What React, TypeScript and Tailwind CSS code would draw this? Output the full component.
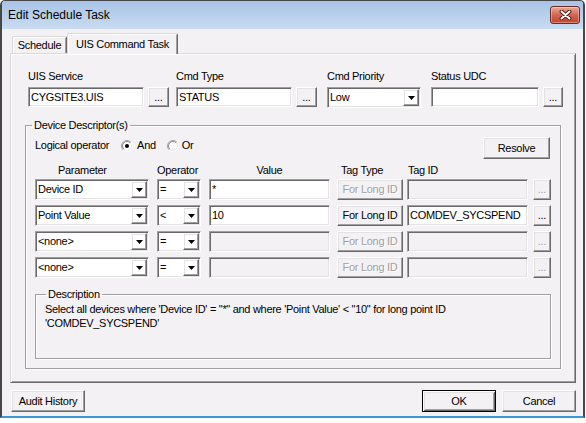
import React from 'react';

// classic 3D edges
const raised =
  'border border-t-white border-l-white border-r-[#696969] border-b-[#696969] shadow-[inset_-1px_-1px_0_#a0a0a0,inset_1px_1px_0_#e3e3e3]';
const defaultRaised =
  'border border-black shadow-[inset_1px_1px_0_#fff,inset_-1px_-1px_0_#696969,inset_2px_2px_0_#e3e3e3,inset_-2px_-2px_0_#a0a0a0]';
const sunken =
  'border border-t-[#a0a0a0] border-l-[#a0a0a0] border-r-white border-b-white shadow-[inset_1px_1px_0_#696969,inset_-1px_-1px_0_#e3e3e3]';
const etched = 'border border-[#a0a0a0] shadow-[inset_1px_1px_0_#fff,1px_1px_0_#fff]';
const grayText = 'text-[#a0a0a0] [text-shadow:1px_1px_0_#fff]';

type BoxProps = { className: string; value?: string; disabled?: boolean };

const TextBox = ({ className, value, disabled }: BoxProps) => (
  <div
    className={`${sunken} ${className} flex items-center pl-[2px] whitespace-nowrap overflow-hidden ${
      disabled ? 'bg-[#f4f1f4]' : 'bg-white'
    }`}
  >
    {value}
  </div>
);

type BtnProps = { className: string; children: React.ReactNode; disabled?: boolean; isDefault?: boolean };

const Button = ({ className, children, disabled, isDefault }: BtnProps) => (
  <div
    className={`${isDefault ? defaultRaised : raised} ${className} flex items-center justify-center whitespace-nowrap ${
      disabled ? grayText : ''
    }`}
  >
    {children}
  </div>
);

const Combo = ({ className, value }: { className: string; value: string }) => (
  <div className={`${sunken} ${className} h-[21px] bg-white flex p-px`}>
    <div className="flex-1 flex items-center pl-[1px] overflow-hidden whitespace-nowrap">{value}</div>
    <div className={`${raised} w-[16px] flex items-center justify-center`}>
      <svg width="7" height="4" viewBox="0 0 7 4">
        <path d="M0 0h7L3.5 4z" fill="#000" />
      </svg>
    </div>
  </div>
);

const Radio = ({ on, id }: { on?: boolean; id: string }) => (
  <svg width="12" height="12" viewBox="0 0 12 12">
    <defs>
      <linearGradient id={`ro-${id}`} x1="0" y1="0" x2="1" y2="1">
        <stop offset="0.45" stopColor="#a0a0a0" />
        <stop offset="0.55" stopColor="#ffffff" />
      </linearGradient>
      <linearGradient id={`ri-${id}`} x1="0" y1="0" x2="1" y2="1">
        <stop offset="0.45" stopColor="#8a8a8a" />
        <stop offset="0.55" stopColor="#e3e3e3" />
      </linearGradient>
    </defs>
    <circle cx="6" cy="6" r="5.5" fill="none" stroke={`url(#ro-${id})`} />
    <circle cx="6" cy="6" r="4.5" fill="#fff" stroke={`url(#ri-${id})`} />
    {on && <circle cx="6" cy="6" r="2" fill="#000" />}
  </svg>
);

const rows = [
  { param: 'Device ID', op: '=', value: '*', valueOn: true, tagOn: false, tag: '' },
  { param: 'Point Value', op: '<', value: '10', valueOn: true, tagOn: true, tag: 'COMDEV_SYCSPEND' },
  { param: '<none>', op: '=', value: '', valueOn: false, tagOn: false, tag: '' },
  { param: '<none>', op: '=', value: '', valueOn: false, tagOn: false, tag: '' },
];

export default function App() {
  return (
    <div className="w-[586px] h-[423px] bg-white font-['Liberation_Sans',Arial,sans-serif] text-[11px] leading-[13px] tracking-[-0.3px] text-black">
      <div className="w-[585px] h-[418px] flex flex-col border-x-2 border-t border-[#474747] border-b-2 border-b-[#3a9ad8] rounded-t-[5px] bg-[#f4f1f4] overflow-hidden">
        {/* title bar */}
        <div className="h-[28px] shrink-0 flex items-center justify-between pl-[6px] pr-[3px] bg-linear-to-b from-[#a7c3e6] to-[#c9dcf1]">
          <span className="text-[12px] leading-[14px] tracking-normal">Edit Schedule Task</span>
          <div className="w-[30px] h-[18px] rounded-[3px] border border-[#6b2b22] bg-linear-to-b from-[#eaa99c] via-[#d3644f] to-[#c2432f] flex items-center justify-center shadow-[inset_0_0_0_1px_rgba(255,255,255,0.35)]">
            <svg width="13" height="10" viewBox="0 0 13 10">
              <path d="M2.5 1.5L10.5 8.5M10.5 1.5L2.5 8.5" stroke="#4a1a14" strokeWidth="3.8" strokeLinecap="round" />
              <path d="M2.5 1.5L10.5 8.5M10.5 1.5L2.5 8.5" stroke="#fff" strokeWidth="2" strokeLinecap="round" />
            </svg>
          </div>
        </div>

        {/* tabs */}
        <div className="ml-[8px] mt-[4px] h-[20px] flex items-end pl-[2px]">
          <div className="h-[17px] w-[55px] flex items-center justify-center border-t border-l border-r border-t-[#dadada] border-l-[#dadada] border-r-[#696969] shadow-[inset_1px_1px_0_#fff,inset_-1px_0_0_#a0a0a0] rounded-t-[2px]">
            Schedule
          </div>
          <div className="h-[21px] w-[111px] -mb-px relative z-10 bg-[#f4f1f4] flex items-center justify-center border-t border-l border-r border-t-[#dadada] border-l-[#dadada] border-r-[#696969] shadow-[inset_1px_1px_0_#fff,inset_-1px_0_0_#a0a0a0] rounded-t-[2px]">
            UIS Command Task
          </div>
        </div>

        {/* tab panel */}
        <div className="ml-[8px] w-[566px] h-[330px] shrink-0 flex flex-col pt-[16px] pl-[14px] border border-t-[#dadada] border-l-[#dadada] border-r-[#696969] border-b-[#696969] shadow-[inset_1px_1px_0_#fff,inset_-1px_-1px_0_#a0a0a0]">
          <div className="ml-[3px] flex items-start">
            <div className="flex flex-col gap-[4px]">
              <span>UIS Service</span>
              <div className="flex gap-[4px]">
                <TextBox className="w-[116px] h-[20px]" value="CYGSITE3.UIS" />
                <Button className="w-[21px] h-[20px]">...</Button>
              </div>
            </div>
            <div className="ml-[7px] flex flex-col gap-[4px]">
              <span>Cmd Type</span>
              <div className="flex gap-[4px]">
                <TextBox className="w-[116px] h-[20px]" value="STATUS" />
                <Button className="w-[21px] h-[20px]">...</Button>
              </div>
            </div>
            <div className="ml-[10px] flex flex-col gap-[4px]">
              <span>Cmd Priority</span>
              <Combo className="w-[94px]" value="Low" />
            </div>
            <div className="ml-[10px] flex flex-col gap-[4px]">
              <span>Status UDC</span>
              <div className="flex gap-[4px]">
                <TextBox className="w-[108px] h-[20px]" />
                <Button className="w-[20px] h-[20px]">...</Button>
              </div>
            </div>
          </div>

          {/* device descriptors */}
          <fieldset className={`${etched} w-[536px] mt-[11px] pb-[9px]`}>
            <legend className="ml-[6px] px-[2px]">Device Descriptor(s)</legend>
            <div className="px-[9px] pt-[5px] flex flex-col">
              <div className="flex items-start justify-between">
                <div className="h-[17px] flex items-center">
                  <span>Logical operator</span>
                  <span className="ml-[12px] flex items-center">
                    <Radio id="and" on />
                  </span>
                  <span className="ml-[4px]">And</span>
                  <span className="ml-[11px] flex items-center">
                    <Radio id="or" />
                  </span>
                  <span className="ml-[3px]">Or</span>
                </div>
                <Button className="w-[67px] h-[22px] mr-[1px]">Resolve</Button>
              </div>

              <div className="mt-[5px] flex">
                <div className="w-[114px] pl-[23px]">Parameter</div>
                <div className="ml-[8px] w-[44px]">Operator</div>
                <div className="ml-[8px] w-[121px] text-center">Value</div>
                <div className="ml-[7px] w-[66px] pl-[4px]">Tag Type</div>
                <div className="ml-[4px] pl-[1px]">Tag ID</div>
              </div>

              <div className="mt-[2px] flex flex-col gap-[5px]">
                {rows.map((r, i) => (
                  <div key={i} className="flex">
                    <Combo className="w-[114px]" value={r.param} />
                    <Combo className="ml-[8px] w-[44px]" value={r.op} />
                    <TextBox className="ml-[8px] w-[121px] h-[21px]" value={r.value} disabled={!r.valueOn} />
                    <Button className="ml-[7px] w-[66px] h-[21px]" disabled={!r.tagOn}>
                      For Long ID
                    </Button>
                    <TextBox className="ml-[4px] w-[121px] h-[21px]" value={r.tag} disabled={!r.tagOn} />
                    <Button className="ml-[5px] w-[18px] h-[21px]" disabled={!r.tagOn}>
                      ...
                    </Button>
                  </div>
                ))}
              </div>

              <fieldset className={`${etched} w-[516px] h-[71px] mt-[10px]`}>
                <legend className="ml-[10px] px-[2px]">Description</legend>
                <p className="pl-[9px] pt-[1px] leading-[14px]">
                  Select all devices where 'Device ID' = "*" and where 'Point Value' &lt; "10" for long point ID
                  <br />
                  'COMDEV_SYCSPEND'
                </p>
              </fieldset>
            </div>
          </fieldset>
        </div>

        {/* dialog buttons */}
        <div className="ml-[8px] w-[566px] mt-[7px] flex justify-between">
          <Button className="ml-[1px] w-[74px] h-[22px]">Audit History</Button>
          <div className="flex gap-[6px]">
            <Button className="w-[74px] h-[22px]" isDefault>
              OK
            </Button>
            <Button className="w-[74px] h-[22px]">Cancel</Button>
          </div>
        </div>
      </div>
    </div>
  );
}
